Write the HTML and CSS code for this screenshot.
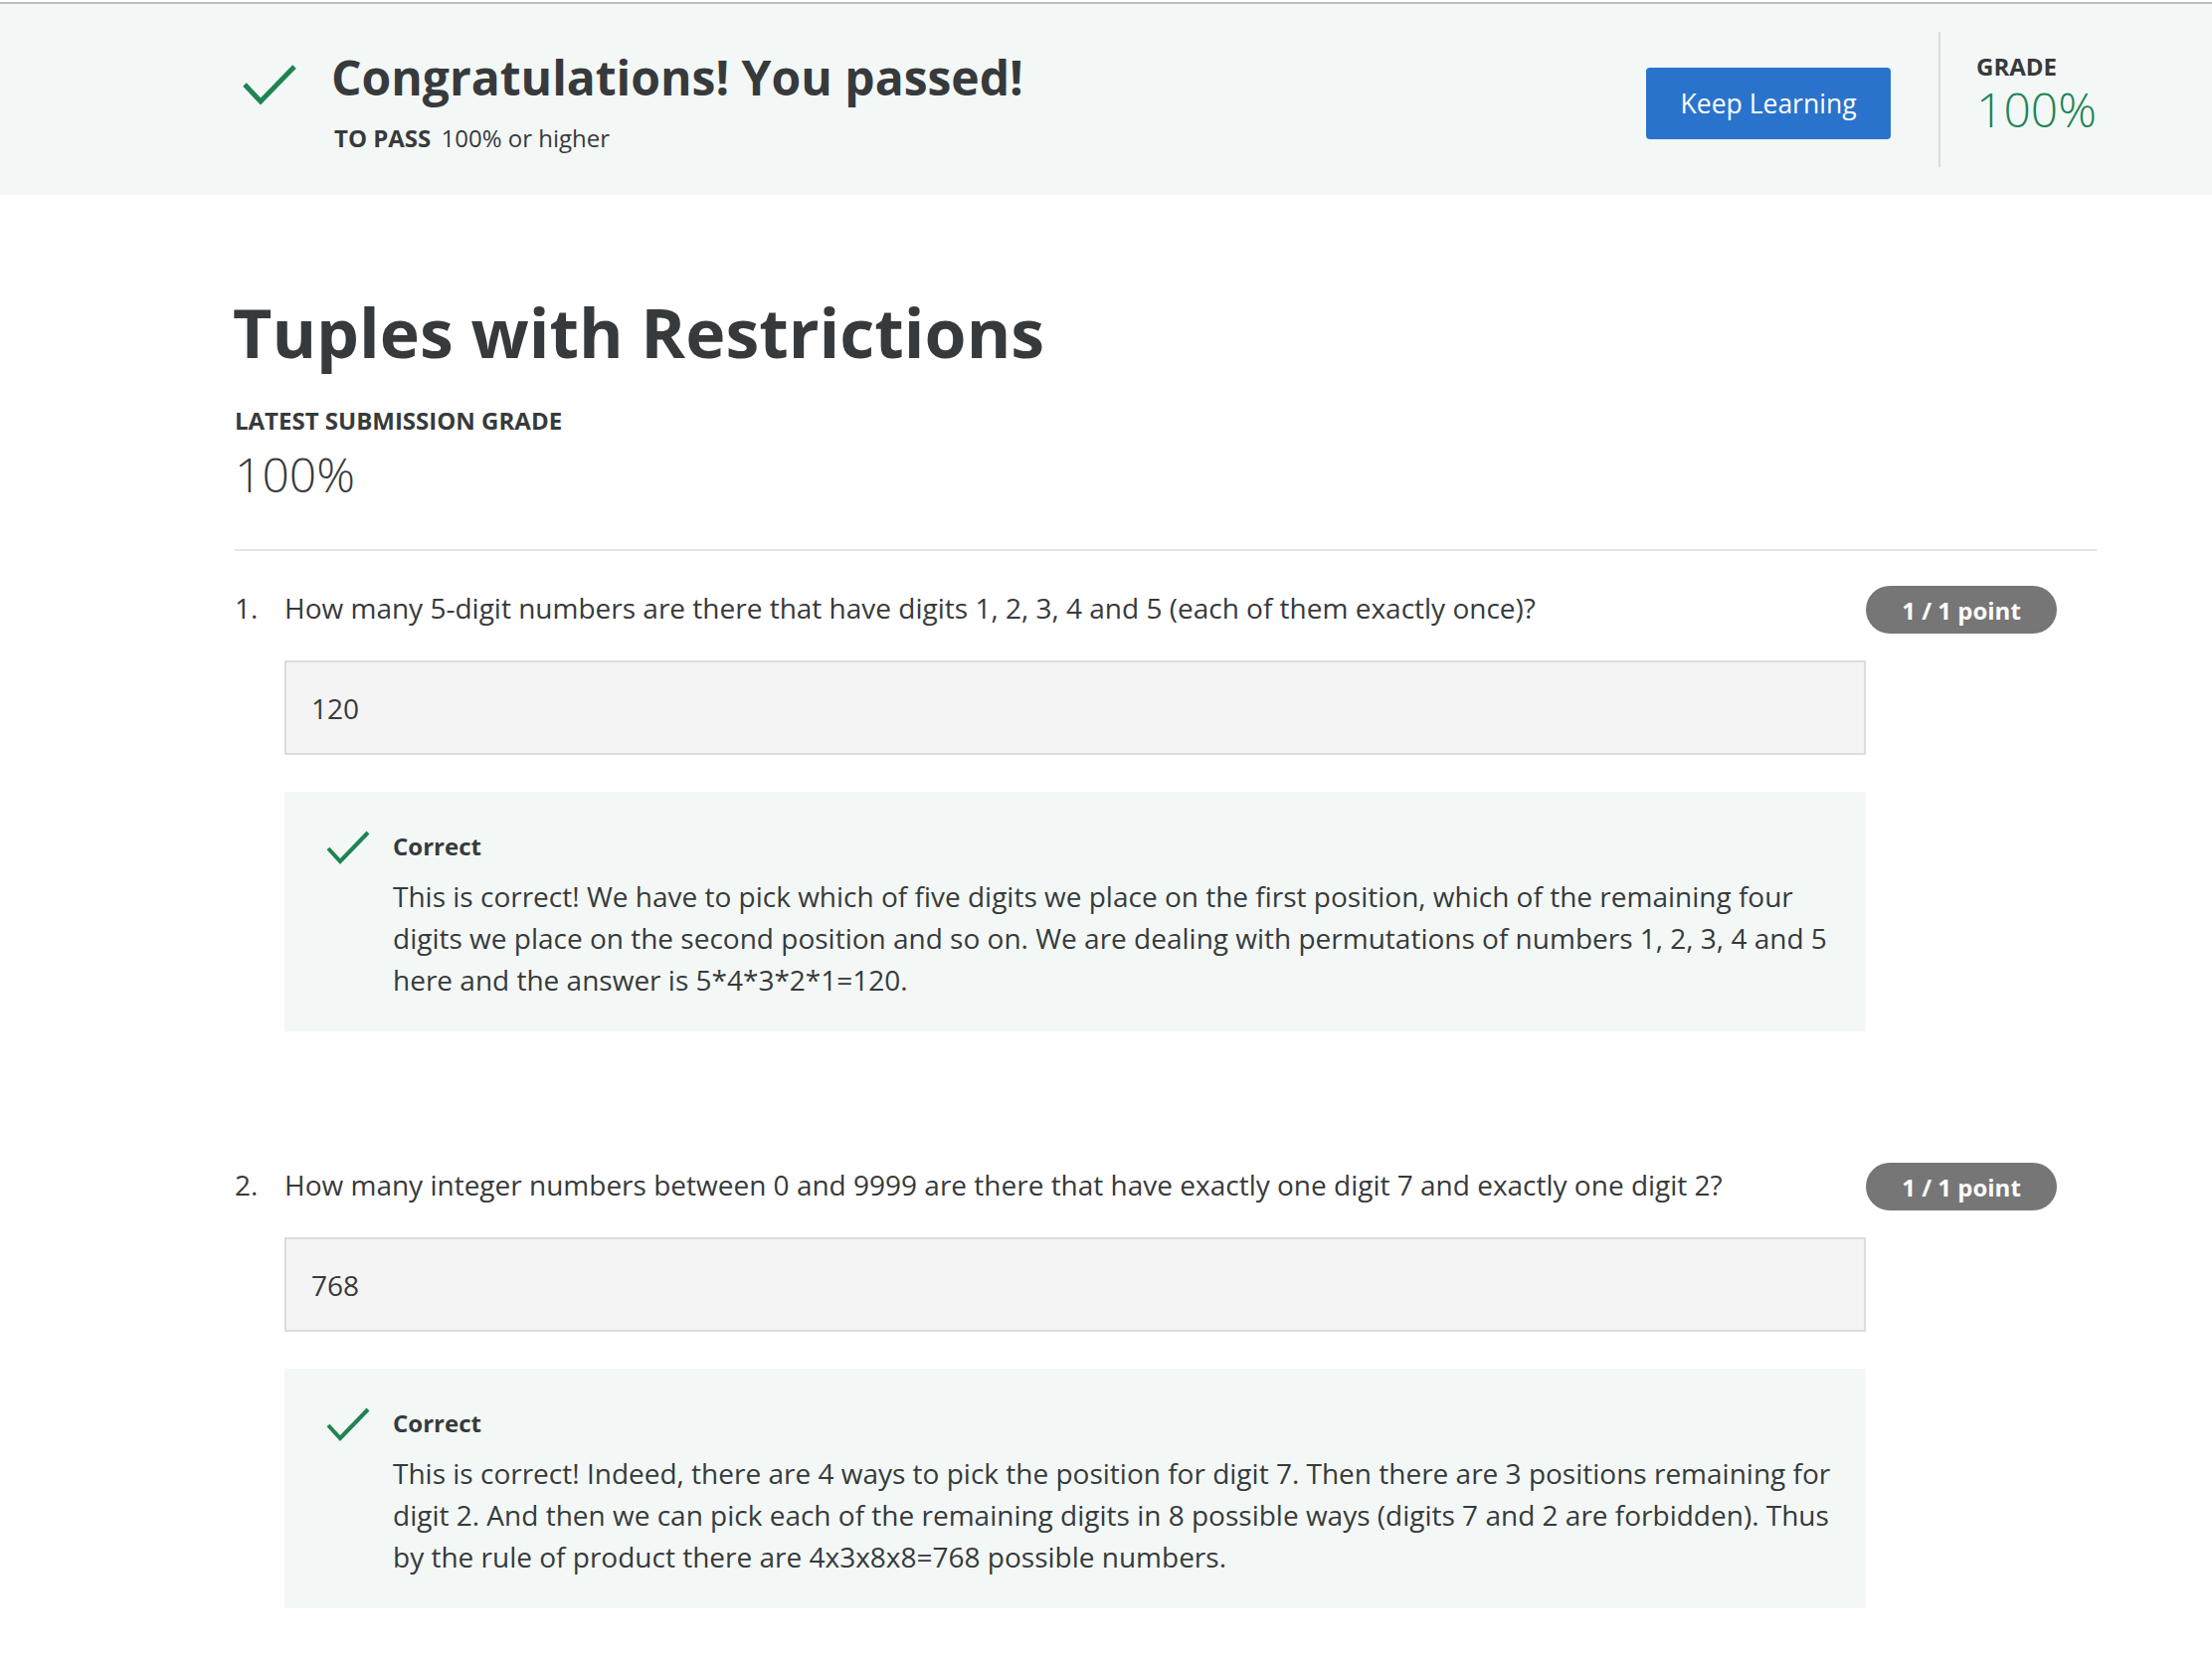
FILE: index.html
```html
<!DOCTYPE html>
<html lang="en">
<head>
<meta charset="utf-8">
<title>Tuples with Restrictions</title>
<link rel="stylesheet" href="styles.css">
</head>
<body>
<header class="banner">
  <div class="banner-inner">
    <div class="pass">
      <svg class="pass-check" width="56" height="44" viewBox="0 0 56 44"><polyline points="3,22 19,39 53,4" fill="none" stroke="#1f8354" stroke-width="5"/></svg>
      <div class="pass-text">
        <h1 class="pass-title">Congratulations! You passed!</h1>
        <div class="pass-req"><span class="pass-req-label">TO PASS</span> 100% or higher</div>
      </div>
    </div>
    <div class="banner-actions">
      <a class="btn" href="#">Keep Learning</a>
      <div class="grade">
        <div class="grade-label">GRADE</div>
        <div class="grade-value">100%</div>
      </div>
    </div>
  </div>
</header>

<main class="content">
  <h2 class="page-title">Tuples with Restrictions</h2>
  <div class="latest-label">LATEST SUBMISSION GRADE</div>
  <div class="latest-value">100%</div>
  <hr class="divider">

  <section class="question">
    <div class="q-row">
      <span class="q-num">1.</span>
      <div class="q-body">
        <p class="q-text">How many 5-digit numbers are there that have digits 1, 2, 3, 4 and 5 (each of them exactly once)?</p>
        <div class="answer">120</div>
        <div class="feedback">
          <svg class="fb-check" width="46" height="36" viewBox="0 0 46 36"><polyline points="3,19 15,32 43,3" fill="none" stroke="#1f8354" stroke-width="4"/></svg>
          <div class="fb-text">
            <div class="fb-title">Correct</div>
            <p class="fb-body">This is correct! We have to pick which of five digits we place on the first position, which of the remaining four digits we place on the second position and so on. We are dealing with permutations of numbers 1, 2, 3, 4 and 5 here and the answer is 5*4*3*2*1=120.</p>
          </div>
        </div>
      </div>
      <span class="badge">1 / 1 point</span>
    </div>
  </section>

  <section class="question">
    <div class="q-row">
      <span class="q-num">2.</span>
      <div class="q-body">
        <p class="q-text">How many integer numbers between 0 and 9999 are there that have exactly one digit 7 and exactly one digit 2?</p>
        <div class="answer">768</div>
        <div class="feedback">
          <svg class="fb-check" width="46" height="36" viewBox="0 0 46 36"><polyline points="3,19 15,32 43,3" fill="none" stroke="#1f8354" stroke-width="4"/></svg>
          <div class="fb-text">
            <div class="fb-title">Correct</div>
            <p class="fb-body">This is correct! Indeed, there are 4 ways to pick the position for digit 7. Then there are 3 positions remaining for digit 2. And then we can pick each of the remaining digits in 8 possible ways (digits 7 and 2 are forbidden). Thus by the rule of product there are 4x3x8x8=768 possible numbers.</p>
          </div>
        </div>
      </div>
      <span class="badge">1 / 1 point</span>
    </div>
  </section>
</main>
</body>
</html>
```

FILE: styles.css
```css
* { box-sizing: border-box; }

body {
  margin: 0;
  padding-top: 2px;
  background: #ffffff;
  color: #373a3c;
  font-family: "Open Sans", "Noto Sans", "Liberation Sans", sans-serif;
}

.banner {
  border-top: 2px solid #bdbdbd;
  background: #f3f8f6;
  height: 194px;
}

.banner-inner {
  display: flex;
  justify-content: space-between;
  align-items: flex-start;
  padding: 0 116px 0 243px;
  height: 100%;
}

.pass {
  display: flex;
  align-items: flex-start;
  padding-top: 44px;
}

.pass-check {
  margin-top: 15px;
  margin-right: 34px;
  flex: none;
}

.pass-title {
  margin: 0;
  font-size: 48px;
  line-height: 60px;
  font-weight: 700;
  color: #373a3c;
}

.pass-req {
  margin-top: 16px;
  font-size: 24px;
  line-height: 30px;
  color: #373a3c;
  padding-left: 3px;
}

.pass-req-label {
  font-weight: 700;
  margin-right: 4px;
}

.banner-actions {
  display: flex;
  align-items: center;
  margin-top: 28px;
}

.btn {
  display: flex;
  align-items: center;
  justify-content: center;
  width: 246px;
  height: 72px;
  margin-top: 8px;
  margin-right: 48px;
  background: #2a73cc;
  color: #ffffff;
  border-radius: 4px;
  font-size: 26.5px;
  text-decoration: none;
}

.grade {
  border-left: 2px solid #dcdcdc;
  height: 136px;
  padding-left: 36px;
  padding-top: 22px;
}

.grade-label {
  font-size: 24px;
  line-height: 26px;
  font-weight: 700;
  color: #373a3c;
}

.grade-value {
  margin-top: 2px;
  font-size: 48px;
  line-height: 56px;
  font-weight: 300;
  color: #1f8354;
}

.content {
  padding: 0 116px 0 236px;
}

.page-title {
  margin: 96px 0 0 -2px;
  font-size: 68px;
  line-height: 84px;
  font-weight: 700;
  color: #373a3c;
}

.latest-label {
  margin-top: 32px;
  font-size: 24px;
  line-height: 30px;
  font-weight: 700;
}

.latest-value {
  margin-top: 11px;
  font-size: 48px;
  line-height: 56px;
  font-weight: 300;
}

.divider {
  margin: 47px 0 0;
  border: none;
  border-top: 2px solid #e4e4e4;
}

.question {
  padding-top: 36px;
}

.question + .question {
  padding-top: 133px;
}

.q-row {
  display: flex;
  align-items: flex-start;
}

.q-num {
  width: 50px;
  flex: none;
  font-size: 28px;
  line-height: 42px;
}

.q-body {
  width: 1590px;
  flex: none;
}

.q-text {
  margin: 0;
  font-size: 28px;
  line-height: 42px;
}

.answer {
  margin-top: 32px;
  height: 95px;
  padding: 25px 25px 0;
  background: #f4f4f4;
  border: 2px solid #dcdcdc;
  font-size: 28px;
  line-height: 42px;
}

.feedback {
  margin-top: 37px;
  display: flex;
  align-items: flex-start;
  background: #f3f8f6;
  padding: 40px 30px 31px 41px;
}

.fb-check {
  flex: none;
  margin-right: 22px;
  margin-top: -2px;
}

.fb-title {
  font-size: 24px;
  line-height: 30px;
  font-weight: 700;
}

.fb-body {
  margin: 14px 0 0;
  font-size: 28px;
  line-height: 42px;
}

.badge {
  flex: none;
  margin-top: -1px;
  width: 192px;
  height: 48px;
  border-radius: 24px;
  background: #767676;
  color: #ffffff;
  font-size: 24px;
  font-weight: 700;
  display: flex;
  align-items: center;
  justify-content: center;
}
```
